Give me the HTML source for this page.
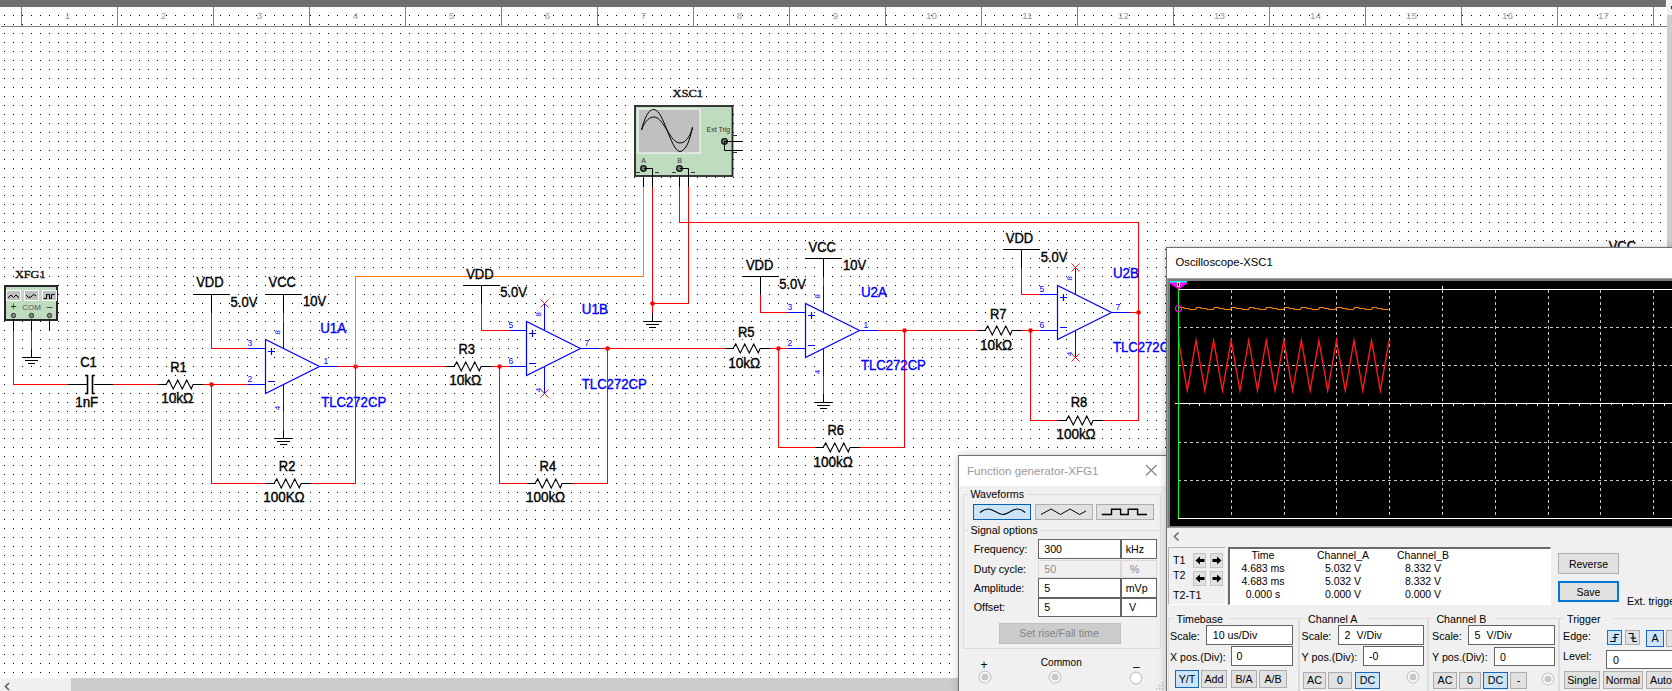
<!DOCTYPE html><html><head><meta charset="utf-8"><style>

*{box-sizing:border-box}
body{margin:0;width:1672px;height:691px;overflow:hidden;position:relative;background:#fff;font-family:"Liberation Sans",sans-serif}
.abs{position:absolute}
.dlg{position:absolute;background:#f0f0f0;border:1px solid #6f6f6f;overflow:hidden}
.t{position:absolute;white-space:nowrap;font-size:10.7px;color:#000;line-height:1}
.box{position:absolute;background:#fff;border:1px solid #7a7a7a}
.btn{position:absolute;background:#e1e1e1;border:1px solid #adadad;text-align:center;font-size:10.7px;white-space:nowrap}
.sel{background:#cce4f7;border:1px solid #1c64b8}
.grp{position:absolute;border:1px solid #dcdcdc}
.rad{position:absolute;width:12px;height:12px;border-radius:50%;background:#fff;border:1px solid #d9d9d9}
.rad i{position:absolute;left:2px;top:2px;width:6px;height:6px;border-radius:50%;background:#c8c8c8}

</style></head><body>
<svg class="abs" style="left:0;top:0" width="1672" height="691">
<defs><pattern id="dots" x="4" y="6" width="9" height="9" patternUnits="userSpaceOnUse"><rect width="1" height="1" fill="#000"/></pattern></defs>
<rect x="0" y="0" width="1672" height="691" fill="url(#dots)"/>
<rect x="0" y="0" width="1666" height="7" fill="#6f6f6f"/>
<path d="M0.5,26.5 L1666.5,26.5" stroke="#808080" stroke-width="1" fill="none" shape-rendering="crispEdges"/>
<path d="M21.5,6.5 L21.5,26.5" stroke="#808080" stroke-width="1" fill="none" shape-rendering="crispEdges"/>
<text x="67.4" y="19.2" font-family='"Liberation Sans",sans-serif' font-size="9.8" font-weight="normal" fill="#9a9a9a" text-anchor="middle" >1</text>
<path d="M117.5,6.5 L117.5,26.5" stroke="#808080" stroke-width="1" fill="none" shape-rendering="crispEdges"/>
<text x="163.4" y="19.2" font-family='"Liberation Sans",sans-serif' font-size="9.8" font-weight="normal" fill="#9a9a9a" text-anchor="middle" >2</text>
<path d="M213.5,6.5 L213.5,26.5" stroke="#808080" stroke-width="1" fill="none" shape-rendering="crispEdges"/>
<text x="259.4" y="19.2" font-family='"Liberation Sans",sans-serif' font-size="9.8" font-weight="normal" fill="#9a9a9a" text-anchor="middle" >3</text>
<path d="M309.5,6.5 L309.5,26.5" stroke="#808080" stroke-width="1" fill="none" shape-rendering="crispEdges"/>
<text x="355.4" y="19.2" font-family='"Liberation Sans",sans-serif' font-size="9.8" font-weight="normal" fill="#9a9a9a" text-anchor="middle" >4</text>
<path d="M405.5,6.5 L405.5,26.5" stroke="#808080" stroke-width="1" fill="none" shape-rendering="crispEdges"/>
<text x="451.4" y="19.2" font-family='"Liberation Sans",sans-serif' font-size="9.8" font-weight="normal" fill="#9a9a9a" text-anchor="middle" >5</text>
<path d="M501.5,6.5 L501.5,26.5" stroke="#808080" stroke-width="1" fill="none" shape-rendering="crispEdges"/>
<text x="547.4" y="19.2" font-family='"Liberation Sans",sans-serif' font-size="9.8" font-weight="normal" fill="#9a9a9a" text-anchor="middle" >6</text>
<path d="M597.5,6.5 L597.5,26.5" stroke="#808080" stroke-width="1" fill="none" shape-rendering="crispEdges"/>
<text x="643.4" y="19.2" font-family='"Liberation Sans",sans-serif' font-size="9.8" font-weight="normal" fill="#9a9a9a" text-anchor="middle" >7</text>
<path d="M693.5,6.5 L693.5,26.5" stroke="#808080" stroke-width="1" fill="none" shape-rendering="crispEdges"/>
<text x="739.4" y="19.2" font-family='"Liberation Sans",sans-serif' font-size="9.8" font-weight="normal" fill="#9a9a9a" text-anchor="middle" >8</text>
<path d="M789.5,6.5 L789.5,26.5" stroke="#808080" stroke-width="1" fill="none" shape-rendering="crispEdges"/>
<text x="835.4" y="19.2" font-family='"Liberation Sans",sans-serif' font-size="9.8" font-weight="normal" fill="#9a9a9a" text-anchor="middle" >9</text>
<path d="M885.5,6.5 L885.5,26.5" stroke="#808080" stroke-width="1" fill="none" shape-rendering="crispEdges"/>
<text x="931.4" y="19.2" font-family='"Liberation Sans",sans-serif' font-size="9.8" font-weight="normal" fill="#9a9a9a" text-anchor="middle" >10</text>
<path d="M981.5,6.5 L981.5,26.5" stroke="#808080" stroke-width="1" fill="none" shape-rendering="crispEdges"/>
<text x="1027.4" y="19.2" font-family='"Liberation Sans",sans-serif' font-size="9.8" font-weight="normal" fill="#9a9a9a" text-anchor="middle" >11</text>
<path d="M1077.5,6.5 L1077.5,26.5" stroke="#808080" stroke-width="1" fill="none" shape-rendering="crispEdges"/>
<text x="1123.4" y="19.2" font-family='"Liberation Sans",sans-serif' font-size="9.8" font-weight="normal" fill="#9a9a9a" text-anchor="middle" >12</text>
<path d="M1173.5,6.5 L1173.5,26.5" stroke="#808080" stroke-width="1" fill="none" shape-rendering="crispEdges"/>
<text x="1219.4" y="19.2" font-family='"Liberation Sans",sans-serif' font-size="9.8" font-weight="normal" fill="#9a9a9a" text-anchor="middle" >13</text>
<path d="M1269.5,6.5 L1269.5,26.5" stroke="#808080" stroke-width="1" fill="none" shape-rendering="crispEdges"/>
<text x="1315.4" y="19.2" font-family='"Liberation Sans",sans-serif' font-size="9.8" font-weight="normal" fill="#9a9a9a" text-anchor="middle" >14</text>
<path d="M1365.5,6.5 L1365.5,26.5" stroke="#808080" stroke-width="1" fill="none" shape-rendering="crispEdges"/>
<text x="1411.4" y="19.2" font-family='"Liberation Sans",sans-serif' font-size="9.8" font-weight="normal" fill="#9a9a9a" text-anchor="middle" >15</text>
<path d="M1461.5,6.5 L1461.5,26.5" stroke="#808080" stroke-width="1" fill="none" shape-rendering="crispEdges"/>
<text x="1507.4" y="19.2" font-family='"Liberation Sans",sans-serif' font-size="9.8" font-weight="normal" fill="#9a9a9a" text-anchor="middle" >16</text>
<path d="M1557.5,6.5 L1557.5,26.5" stroke="#808080" stroke-width="1" fill="none" shape-rendering="crispEdges"/>
<text x="1603.4" y="19.2" font-family='"Liberation Sans",sans-serif' font-size="9.8" font-weight="normal" fill="#9a9a9a" text-anchor="middle" >17</text>
<path d="M1653.5,6.5 L1653.5,26.5" stroke="#808080" stroke-width="1" fill="none" shape-rendering="crispEdges"/>
<rect x="1667" y="0" width="5" height="691" fill="#cdcdcd"/>
<rect x="1667" y="0" width="5" height="15" fill="#f0f0f0"/>
<rect x="1671" y="6" width="1" height="3" fill="#333"/>
<rect x="0" y="678" width="1672" height="13" fill="#cdcdcd"/>
<rect x="0" y="678" width="71" height="13" fill="#f0f0f0"/>
<path d="M9,683L5.5,686.5L9,690" stroke="#606060" stroke-width="1.6" fill="none"/>
<rect x="5" y="286" width="52" height="34" fill="#c0dcc0" stroke="#262626" stroke-width="2"/>
<rect x="6.5" y="290.5" width="14" height="10" fill="#c0c0c0" stroke="#fff" stroke-width="1"/>
<rect x="24.5" y="290.5" width="14" height="10" fill="#c0c0c0" stroke="#fff" stroke-width="1"/>
<rect x="42.5" y="290.5" width="14" height="10" fill="#c0c0c0" stroke="#fff" stroke-width="1"/>
<path d="M8,298L11,295L13.5,297.5L16,295L19,298" stroke="#000" stroke-width="1" fill="none"/>
<path d="M26,295Q28.5,299 31,297Q33.5,293 36,296" stroke="#000" stroke-width="1" fill="none"/>
<path d="M43.5,298.5H46.5V294.5H49.5V298.5H51.5V294.5H54.5" stroke="#000" stroke-width="1" fill="none"/>
<text x="13.5" y="310" font-family='"Liberation Sans",sans-serif' font-size="10" font-weight="normal" fill="#202020" text-anchor="middle" >+</text>
<text x="31.5" y="310" font-family='"Liberation Sans",sans-serif' font-size="8" font-weight="normal" fill="#555" text-anchor="middle" >COM</text>
<text x="49.5" y="310" font-family='"Liberation Sans",sans-serif' font-size="10" font-weight="normal" fill="#202020" text-anchor="middle" >–</text>
<circle cx="13.5" cy="315.5" r="2.2" fill="#888" stroke="#333" stroke-width="1"/>
<circle cx="31.5" cy="315.5" r="2.2" fill="#888" stroke="#333" stroke-width="1"/>
<circle cx="49.5" cy="315.5" r="2.2" fill="#888" stroke="#333" stroke-width="1"/>
<text x="15" y="277.6" font-family="Liberation Serif" font-size="11.3" fill="#111" stroke="#111" stroke-width="0.35" textLength="30.5" lengthAdjust="spacingAndGlyphs">XFG1</text>
<path d="M13.5,318.5 L13.5,330.5" stroke="#000000" stroke-width="1" fill="none" shape-rendering="crispEdges"/>
<path d="M13.5,330.5 L13.5,384.5 L67.5,384.5" stroke="#ff0000" stroke-width="1" fill="none" shape-rendering="crispEdges"/>
<path d="M31.5,318.5 L31.5,330.5" stroke="#000000" stroke-width="1" fill="none" shape-rendering="crispEdges"/>
<path d="M31.5,330.5 L31.5,348.5" stroke="#ff0000" stroke-width="1" fill="none" shape-rendering="crispEdges"/>
<path d="M31.5,348.5 L31.5,357.5" stroke="#000000" stroke-width="1" fill="none" shape-rendering="crispEdges"/>
<path d="M22,357.5H41M25,360.5H38M28,363.5H35" stroke="#000" stroke-width="1" shape-rendering="crispEdges"/>
<path d="M49.5,318.5 L49.5,330.5" stroke="#000000" stroke-width="1" fill="none" shape-rendering="crispEdges"/>
<path d="M67.5,384.5 L86.5,384.5" stroke="#000000" stroke-width="1" fill="none" shape-rendering="crispEdges"/>
<path d="M94.5,384.5 L112.5,384.5" stroke="#000000" stroke-width="1" fill="none" shape-rendering="crispEdges"/>
<path d="M85,375.5H87.5V393.5H85M95,375.5H92.5V393.5H95" stroke="#000" stroke-width="1.6" fill="none"/>
<text x="80.2" y="367.4" font-family='"Liberation Sans",sans-serif' font-size="14" font-weight="normal" fill="#000" stroke="#000" stroke-width="0.38" text-anchor="start" textLength="16.6" lengthAdjust="spacingAndGlyphs" >C1</text>
<text x="75.2" y="407.4" font-family='"Liberation Sans",sans-serif' font-size="14" font-weight="normal" fill="#000" stroke="#000" stroke-width="0.38" text-anchor="start" textLength="23.1" lengthAdjust="spacingAndGlyphs" >1nF</text>
<path d="M112.5,384.5 L157.5,384.5" stroke="#ff0000" stroke-width="1" fill="none" shape-rendering="crispEdges"/>
<path d="M157.5,384.5 L166.5,384.5" stroke="#000000" stroke-width="1" fill="none" shape-rendering="crispEdges"/>
<path d="M193.5,384.5 L202.5,384.5" stroke="#000000" stroke-width="1" fill="none" shape-rendering="crispEdges"/>
<path d="M166,384.5 L168.75,380.0 L173.25,389.0 L177.75,380.0 L182.25,389.0 L186.75,380.0 L191.25,389.0 L193,384.5" stroke="#000" stroke-width="1.1" fill="none"/>
<text x="170.2" y="372" font-family='"Liberation Sans",sans-serif' font-size="14" font-weight="normal" fill="#000" stroke="#000" stroke-width="0.38" text-anchor="start" textLength="16.6" lengthAdjust="spacingAndGlyphs" >R1</text>
<text x="161.2" y="403.4" font-family='"Liberation Sans",sans-serif' font-size="14" font-weight="normal" fill="#000" stroke="#000" stroke-width="0.38" text-anchor="start" textLength="32.1" lengthAdjust="spacingAndGlyphs" >10kΩ</text>
<path d="M202.5,384.5 L247.5,384.5" stroke="#ff0000" stroke-width="1" fill="none" shape-rendering="crispEdges"/>
<circle cx="211.5" cy="384.5" r="2.3" fill="#ff0000"/>
<path d="M211.5,384.5 L211.5,483.5 L265.5,483.5" stroke="#ff0000" stroke-width="1" fill="none" shape-rendering="crispEdges"/>
<path d="M265.5,483.5 L274.5,483.5" stroke="#000000" stroke-width="1" fill="none" shape-rendering="crispEdges"/>
<path d="M301.5,483.5 L310.5,483.5" stroke="#000000" stroke-width="1" fill="none" shape-rendering="crispEdges"/>
<path d="M274,483.5 L276.75,479.0 L281.25,488.0 L285.75,479.0 L290.25,488.0 L294.75,479.0 L299.25,488.0 L301,483.5" stroke="#000" stroke-width="1.1" fill="none"/>
<text x="278.8" y="471" font-family='"Liberation Sans",sans-serif' font-size="14" font-weight="normal" fill="#000" stroke="#000" stroke-width="0.38" text-anchor="start" textLength="16.6" lengthAdjust="spacingAndGlyphs" >R2</text>
<text x="263.2" y="502" font-family='"Liberation Sans",sans-serif' font-size="14" font-weight="normal" fill="#000" stroke="#000" stroke-width="0.38" text-anchor="start" textLength="41.5" lengthAdjust="spacingAndGlyphs" >100KΩ</text>
<path d="M310.5,483.5 L355.5,483.5 L355.5,366.5" stroke="#ff0000" stroke-width="1" fill="none" shape-rendering="crispEdges"/>
<path d="M193.5,294.5 L229.5,294.5" stroke="#000000" stroke-width="1" fill="none" shape-rendering="crispEdges"/>
<path d="M211.5,294.5 L211.5,312.5" stroke="#000000" stroke-width="1" fill="none" shape-rendering="crispEdges"/>
<text x="196.2" y="287.4" font-family='"Liberation Sans",sans-serif' font-size="14" font-weight="normal" fill="#000" stroke="#000" stroke-width="0.38" text-anchor="start" textLength="27.4" lengthAdjust="spacingAndGlyphs" >VDD</text>
<text x="230.6" y="306.5" font-family='"Liberation Sans",sans-serif' font-size="14" font-weight="normal" fill="#000" stroke="#000" stroke-width="0.38" text-anchor="start" textLength="26.7" lengthAdjust="spacingAndGlyphs" >5.0V</text>
<path d="M211.5,312.5 L211.5,348.5 L247.5,348.5" stroke="#ff0000" stroke-width="1" fill="none" shape-rendering="crispEdges"/>
<path d="M265.5,294.5 L301.5,294.5" stroke="#000000" stroke-width="1" fill="none" shape-rendering="crispEdges"/>
<path d="M283.5,294.5 L283.5,312.5" stroke="#000000" stroke-width="1" fill="none" shape-rendering="crispEdges"/>
<text x="268.59999999999997" y="287" font-family='"Liberation Sans",sans-serif' font-size="14" font-weight="normal" fill="#000" stroke="#000" stroke-width="0.38" text-anchor="start" textLength="27.4" lengthAdjust="spacingAndGlyphs" >VCC</text>
<text x="303.0" y="306.3" font-family='"Liberation Sans",sans-serif' font-size="14" font-weight="normal" fill="#000" stroke="#000" stroke-width="0.38" text-anchor="start" textLength="23.1" lengthAdjust="spacingAndGlyphs" >10V</text>
<path d="M283.5,312.5 L283.5,321.5" stroke="#ff0000" stroke-width="1" fill="none" shape-rendering="crispEdges"/>
<path d="M265.5,339.5L265.5,393.5L319.5,366.5Z" stroke="#0000ff" stroke-width="1.2" fill="none"/>
<path d="M247.5,348.5 L265.5,348.5" stroke="#0000ff" stroke-width="1" fill="none" shape-rendering="crispEdges"/>
<path d="M247.5,384.5 L265.5,384.5" stroke="#0000ff" stroke-width="1" fill="none" shape-rendering="crispEdges"/>
<path d="M319.5,366.5 L337.5,366.5" stroke="#0000ff" stroke-width="1" fill="none" shape-rendering="crispEdges"/>
<path d="M283.5,339.5 L283.5,348.5" stroke="#0000ff" stroke-width="1" fill="none" shape-rendering="crispEdges"/>
<path d="M283.5,384.5 L283.5,411.5" stroke="#0000ff" stroke-width="1" fill="none" shape-rendering="crispEdges"/>
<path d="M283.5,321.5 L283.5,348.5" stroke="#0000ff" stroke-width="1" fill="none" shape-rendering="crispEdges"/>
<path d="M268,351.5H275M271.5,348V355M268,381.5H275" stroke="#0000ff" stroke-width="1.2"/>
<text x="247.5" y="346.3" font-family="Liberation Sans" font-size="8.5" fill="#0000ff">3</text>
<text x="247.5" y="382.2" font-family="Liberation Sans" font-size="8.5" fill="#0000ff">2</text>
<text x="323.5" y="363.8" font-family="Liberation Sans" font-size="8.5" fill="#0000ff">1</text>
<text transform="translate(279.7,332.3) rotate(-90)" text-anchor="middle" font-family="Liberation Sans" font-size="8" fill="#0000ff">8</text>
<text transform="translate(279.7,408) rotate(-90)" text-anchor="middle" font-family="Liberation Sans" font-size="8" fill="#0000ff">4</text>
<path d="M283.5,411.5 L283.5,429.5" stroke="#ff0000" stroke-width="1" fill="none" shape-rendering="crispEdges"/>
<path d="M283.5,429.5 L283.5,438.5" stroke="#000000" stroke-width="1" fill="none" shape-rendering="crispEdges"/>
<path d="M274,438.5H293M277,441.5H290M280,444.5H287" stroke="#000" stroke-width="1" shape-rendering="crispEdges"/>
<text x="320.2" y="333" font-family='"Liberation Sans",sans-serif' font-size="14" font-weight="normal" fill="#0000ff" stroke="#0000ff" stroke-width="0.38" text-anchor="start" textLength="26.0" lengthAdjust="spacingAndGlyphs" >U1A</text>
<text x="321.2" y="406.7" font-family='"Liberation Sans",sans-serif' font-size="14" font-weight="normal" fill="#0000ff" stroke="#0000ff" stroke-width="0.38" text-anchor="start" textLength="65.0" lengthAdjust="spacingAndGlyphs" >TLC272CP</text>
<path d="M337.5,366.5 L445.5,366.5" stroke="#ff0000" stroke-width="1" fill="none" shape-rendering="crispEdges"/>
<circle cx="355.5" cy="366.5" r="2.3" fill="#ff0000"/>
<path d="M355.5,366.5 L355.5,276.5 L643.5,276.5 L643.5,186.5" stroke="#ff8000" stroke-width="1" fill="none" shape-rendering="crispEdges"/>
<path d="M445.5,366.5 L454.5,366.5" stroke="#000000" stroke-width="1" fill="none" shape-rendering="crispEdges"/>
<path d="M481.5,366.5 L490.5,366.5" stroke="#000000" stroke-width="1" fill="none" shape-rendering="crispEdges"/>
<path d="M454,366.5 L456.75,362.0 L461.25,371.0 L465.75,362.0 L470.25,371.0 L474.75,362.0 L479.25,371.0 L481,366.5" stroke="#000" stroke-width="1.1" fill="none"/>
<text x="458.4" y="353.8" font-family='"Liberation Sans",sans-serif' font-size="14" font-weight="normal" fill="#000" stroke="#000" stroke-width="0.38" text-anchor="start" textLength="16.6" lengthAdjust="spacingAndGlyphs" >R3</text>
<text x="449.2" y="385" font-family='"Liberation Sans",sans-serif' font-size="14" font-weight="normal" fill="#000" stroke="#000" stroke-width="0.38" text-anchor="start" textLength="32.1" lengthAdjust="spacingAndGlyphs" >10kΩ</text>
<path d="M490.5,366.5 L508.5,366.5" stroke="#ff0000" stroke-width="1" fill="none" shape-rendering="crispEdges"/>
<circle cx="499.5" cy="366.5" r="2.3" fill="#ff0000"/>
<path d="M499.5,366.5 L499.5,483.5 L526.5,483.5" stroke="#ff0000" stroke-width="1" fill="none" shape-rendering="crispEdges"/>
<path d="M526.5,483.5 L535.5,483.5" stroke="#000000" stroke-width="1" fill="none" shape-rendering="crispEdges"/>
<path d="M562.5,483.5 L571.5,483.5" stroke="#000000" stroke-width="1" fill="none" shape-rendering="crispEdges"/>
<path d="M535,483.5 L537.75,479.0 L542.25,488.0 L546.75,479.0 L551.25,488.0 L555.75,479.0 L560.25,488.0 L562,483.5" stroke="#000" stroke-width="1.1" fill="none"/>
<text x="539.6" y="471.2" font-family='"Liberation Sans",sans-serif' font-size="14" font-weight="normal" fill="#000" stroke="#000" stroke-width="0.38" text-anchor="start" textLength="16.6" lengthAdjust="spacingAndGlyphs" >R4</text>
<text x="525.9000000000001" y="501.5" font-family='"Liberation Sans",sans-serif' font-size="14" font-weight="normal" fill="#000" stroke="#000" stroke-width="0.38" text-anchor="start" textLength="39.3" lengthAdjust="spacingAndGlyphs" >100kΩ</text>
<path d="M571.5,483.5 L607.5,483.5 L607.5,348.5" stroke="#ff0000" stroke-width="1" fill="none" shape-rendering="crispEdges"/>
<path d="M463.5,285.5 L499.5,285.5" stroke="#000000" stroke-width="1" fill="none" shape-rendering="crispEdges"/>
<path d="M481.5,285.5 L481.5,303.5" stroke="#000000" stroke-width="1" fill="none" shape-rendering="crispEdges"/>
<text x="466.2" y="278.5" font-family='"Liberation Sans",sans-serif' font-size="14" font-weight="normal" fill="#000" stroke="#000" stroke-width="0.38" text-anchor="start" textLength="27.4" lengthAdjust="spacingAndGlyphs" >VDD</text>
<text x="500.2" y="297" font-family='"Liberation Sans",sans-serif' font-size="14" font-weight="normal" fill="#000" stroke="#000" stroke-width="0.38" text-anchor="start" textLength="26.7" lengthAdjust="spacingAndGlyphs" >5.0V</text>
<path d="M481.5,303.5 L481.5,330.5 L508.5,330.5" stroke="#ff0000" stroke-width="1" fill="none" shape-rendering="crispEdges"/>
<path d="M526.5,321.5L526.5,375.5L580.5,348.5Z" stroke="#0000ff" stroke-width="1.2" fill="none"/>
<path d="M508.5,330.5 L526.5,330.5" stroke="#0000ff" stroke-width="1" fill="none" shape-rendering="crispEdges"/>
<path d="M508.5,366.5 L526.5,366.5" stroke="#0000ff" stroke-width="1" fill="none" shape-rendering="crispEdges"/>
<path d="M580.5,348.5 L598.5,348.5" stroke="#0000ff" stroke-width="1" fill="none" shape-rendering="crispEdges"/>
<path d="M544.5,303.5 L544.5,330.5" stroke="#0000ff" stroke-width="1" fill="none" shape-rendering="crispEdges"/>
<path d="M544.5,366.5 L544.5,393.5" stroke="#0000ff" stroke-width="1" fill="none" shape-rendering="crispEdges"/>
<path d="M540.5,299.5L548.5,307.5M548.5,299.5L540.5,307.5" stroke="#ff0000" stroke-width="0.9"/>
<path d="M540.5,389.5L548.5,397.5M548.5,389.5L540.5,397.5" stroke="#ff0000" stroke-width="0.9"/>
<path d="M529,333.5H536M532.5,330V337M529,363.5H536" stroke="#0000ff" stroke-width="1.2"/>
<text x="508.5" y="328.3" font-family="Liberation Sans" font-size="8.5" fill="#0000ff">5</text>
<text x="508.5" y="364.2" font-family="Liberation Sans" font-size="8.5" fill="#0000ff">6</text>
<text x="584.5" y="345.8" font-family="Liberation Sans" font-size="8.5" fill="#0000ff">7</text>
<text transform="translate(540.7,314.3) rotate(-90)" text-anchor="middle" font-family="Liberation Sans" font-size="8" fill="#0000ff">8</text>
<text transform="translate(540.7,390) rotate(-90)" text-anchor="middle" font-family="Liberation Sans" font-size="8" fill="#0000ff">4</text>
<text x="581.8000000000001" y="314.4" font-family='"Liberation Sans",sans-serif' font-size="14" font-weight="normal" fill="#0000ff" stroke="#0000ff" stroke-width="0.38" text-anchor="start" textLength="26.0" lengthAdjust="spacingAndGlyphs" >U1B</text>
<text x="581.8000000000001" y="388.5" font-family='"Liberation Sans",sans-serif' font-size="14" font-weight="normal" fill="#0000ff" stroke="#0000ff" stroke-width="0.38" text-anchor="start" textLength="65.0" lengthAdjust="spacingAndGlyphs" >TLC272CP</text>
<path d="M598.5,348.5 L724.5,348.5" stroke="#ff0000" stroke-width="1" fill="none" shape-rendering="crispEdges"/>
<circle cx="607.5" cy="348.5" r="2.3" fill="#ff0000"/>
<rect x="635" y="106" width="97.5" height="70" fill="#c0dcc0" stroke="#262626" stroke-width="1.8"/>
<rect x="638" y="109" width="62" height="44" fill="#c0c0c0" stroke="#fff" stroke-width="1"/>
<path d="M641.5,130 C646,112 651,109 654,109.5 C659,110 663,120 667,130 C671,140 675,151 680,151.5 C686,151 690,140 692.5,127" stroke="#000" stroke-width="1" fill="none"/>
<path d="M641.5,130 C645,120 650,117 654,117 C659,117 663,124 667,130 C671,137 675,143 680,143 C686,143 690,136 692.5,128" stroke="#000" stroke-width="1" fill="none"/>
<text x="672.5" y="97.3" font-family="Liberation Serif" font-size="10.8" fill="#111" stroke="#111" stroke-width="0.35" textLength="30.5" lengthAdjust="spacingAndGlyphs">XSC1</text>
<text x="706.5" y="132" font-family='"Liberation Sans",sans-serif' font-size="7" font-weight="normal" fill="#333" text-anchor="start" >Ext Trig</text>
<text x="643.5" y="163" font-family='"Liberation Sans",sans-serif' font-size="7" font-weight="normal" fill="#333" text-anchor="middle" >A</text>
<text x="679.5" y="163" font-family='"Liberation Sans",sans-serif' font-size="7" font-weight="normal" fill="#333" text-anchor="middle" >B</text>
<circle cx="643.5" cy="168.5" r="2.8" fill="#777" stroke="#111" stroke-width="1.3"/>
<circle cx="679.5" cy="168.5" r="2.8" fill="#777" stroke="#111" stroke-width="1.3"/>
<circle cx="724.5" cy="141.5" r="2.8" fill="#777" stroke="#111" stroke-width="1.3"/>
<path d="M644,168.5H652.5V177M680,168.5H688.5V177" stroke="#000" stroke-width="1" fill="none"/>
<path d="M724.5,141.5H743M724.5,141.5V150.5H743" stroke="#000" stroke-width="1" fill="none"/>
<path d="M636,172.5H640M655,172.5H659M672,172.5H676M691,172.5H695M733,135.5H737M733,152.5H737" stroke="#333" stroke-width="1"/>
<path d="M643.5,177.5 L643.5,186.5" stroke="#000000" stroke-width="1" fill="none" shape-rendering="crispEdges"/>
<path d="M652.5,177.5 L652.5,186.5" stroke="#000000" stroke-width="1" fill="none" shape-rendering="crispEdges"/>
<path d="M679.5,177.5 L679.5,186.5" stroke="#000000" stroke-width="1" fill="none" shape-rendering="crispEdges"/>
<path d="M688.5,177.5 L688.5,186.5" stroke="#000000" stroke-width="1" fill="none" shape-rendering="crispEdges"/>
<path d="M652.5,186.5 L652.5,312.5" stroke="#ff0000" stroke-width="1" fill="none" shape-rendering="crispEdges"/>
<path d="M652.5,312.5 L652.5,321.5" stroke="#000000" stroke-width="1" fill="none" shape-rendering="crispEdges"/>
<path d="M643,321.5H662M646,324.5H659M649,327.5H656" stroke="#000" stroke-width="1" shape-rendering="crispEdges"/>
<circle cx="652.5" cy="303.5" r="2.3" fill="#ff0000"/>
<path d="M652.5,303.5 L688.5,303.5 L688.5,186.5" stroke="#ff0000" stroke-width="1" fill="none" shape-rendering="crispEdges"/>
<path d="M679.5,186.5 L679.5,222.5 L1138.5,222.5 L1138.5,420.5 L1102.5,420.5" stroke="#ff0000" stroke-width="1" fill="none" shape-rendering="crispEdges"/>
<path d="M724.5,348.5 L733.5,348.5" stroke="#000000" stroke-width="1" fill="none" shape-rendering="crispEdges"/>
<path d="M760.5,348.5 L769.5,348.5" stroke="#000000" stroke-width="1" fill="none" shape-rendering="crispEdges"/>
<path d="M733,348.5 L735.75,344.0 L740.25,353.0 L744.75,344.0 L749.25,353.0 L753.75,344.0 L758.25,353.0 L760,348.5" stroke="#000" stroke-width="1.1" fill="none"/>
<text x="737.9000000000001" y="336.5" font-family='"Liberation Sans",sans-serif' font-size="14" font-weight="normal" fill="#000" stroke="#000" stroke-width="0.38" text-anchor="start" textLength="16.6" lengthAdjust="spacingAndGlyphs" >R5</text>
<text x="728.2" y="367.5" font-family='"Liberation Sans",sans-serif' font-size="14" font-weight="normal" fill="#000" stroke="#000" stroke-width="0.38" text-anchor="start" textLength="32.1" lengthAdjust="spacingAndGlyphs" >10kΩ</text>
<path d="M769.5,348.5 L787.5,348.5" stroke="#ff0000" stroke-width="1" fill="none" shape-rendering="crispEdges"/>
<circle cx="778.5" cy="348.5" r="2.3" fill="#ff0000"/>
<path d="M778.5,348.5 L778.5,447.5 L814.5,447.5" stroke="#ff0000" stroke-width="1" fill="none" shape-rendering="crispEdges"/>
<path d="M814.5,447.5 L823.5,447.5" stroke="#000000" stroke-width="1" fill="none" shape-rendering="crispEdges"/>
<path d="M850.5,447.5 L859.5,447.5" stroke="#000000" stroke-width="1" fill="none" shape-rendering="crispEdges"/>
<path d="M823,447.5 L825.75,443.0 L830.25,452.0 L834.75,443.0 L839.25,452.0 L843.75,443.0 L848.25,452.0 L850,447.5" stroke="#000" stroke-width="1.1" fill="none"/>
<text x="827.5" y="435.3" font-family='"Liberation Sans",sans-serif' font-size="14" font-weight="normal" fill="#000" stroke="#000" stroke-width="0.38" text-anchor="start" textLength="16.6" lengthAdjust="spacingAndGlyphs" >R6</text>
<text x="813.6" y="466.9" font-family='"Liberation Sans",sans-serif' font-size="14" font-weight="normal" fill="#000" stroke="#000" stroke-width="0.38" text-anchor="start" textLength="39.3" lengthAdjust="spacingAndGlyphs" >100kΩ</text>
<path d="M859.5,447.5 L904.5,447.5 L904.5,330.5" stroke="#ff0000" stroke-width="1" fill="none" shape-rendering="crispEdges"/>
<path d="M742.5,276.5 L778.5,276.5" stroke="#000000" stroke-width="1" fill="none" shape-rendering="crispEdges"/>
<path d="M760.5,276.5 L760.5,294.5" stroke="#000000" stroke-width="1" fill="none" shape-rendering="crispEdges"/>
<text x="745.9000000000001" y="269.9" font-family='"Liberation Sans",sans-serif' font-size="14" font-weight="normal" fill="#000" stroke="#000" stroke-width="0.38" text-anchor="start" textLength="27.4" lengthAdjust="spacingAndGlyphs" >VDD</text>
<text x="779.2" y="288.6" font-family='"Liberation Sans",sans-serif' font-size="14" font-weight="normal" fill="#000" stroke="#000" stroke-width="0.38" text-anchor="start" textLength="26.7" lengthAdjust="spacingAndGlyphs" >5.0V</text>
<path d="M760.5,294.5 L760.5,312.5 L787.5,312.5" stroke="#ff0000" stroke-width="1" fill="none" shape-rendering="crispEdges"/>
<path d="M805.5,258.5 L841.5,258.5" stroke="#000000" stroke-width="1" fill="none" shape-rendering="crispEdges"/>
<path d="M823.5,258.5 L823.5,276.5" stroke="#000000" stroke-width="1" fill="none" shape-rendering="crispEdges"/>
<text x="808.6" y="251.5" font-family='"Liberation Sans",sans-serif' font-size="14" font-weight="normal" fill="#000" stroke="#000" stroke-width="0.38" text-anchor="start" textLength="27.4" lengthAdjust="spacingAndGlyphs" >VCC</text>
<text x="843.0" y="269.9" font-family='"Liberation Sans",sans-serif' font-size="14" font-weight="normal" fill="#000" stroke="#000" stroke-width="0.38" text-anchor="start" textLength="23.1" lengthAdjust="spacingAndGlyphs" >10V</text>
<path d="M823.5,276.5 L823.5,285.5" stroke="#ff0000" stroke-width="1" fill="none" shape-rendering="crispEdges"/>
<path d="M805.5,303.5L805.5,357.5L859.5,330.5Z" stroke="#0000ff" stroke-width="1.2" fill="none"/>
<path d="M787.5,312.5 L805.5,312.5" stroke="#0000ff" stroke-width="1" fill="none" shape-rendering="crispEdges"/>
<path d="M787.5,348.5 L805.5,348.5" stroke="#0000ff" stroke-width="1" fill="none" shape-rendering="crispEdges"/>
<path d="M859.5,330.5 L877.5,330.5" stroke="#0000ff" stroke-width="1" fill="none" shape-rendering="crispEdges"/>
<path d="M823.5,303.5 L823.5,312.5" stroke="#0000ff" stroke-width="1" fill="none" shape-rendering="crispEdges"/>
<path d="M823.5,348.5 L823.5,375.5" stroke="#0000ff" stroke-width="1" fill="none" shape-rendering="crispEdges"/>
<path d="M823.5,285.5 L823.5,312.5" stroke="#0000ff" stroke-width="1" fill="none" shape-rendering="crispEdges"/>
<path d="M808,315.5H815M811.5,312V319M808,345.5H815" stroke="#0000ff" stroke-width="1.2"/>
<text x="787.5" y="310.3" font-family="Liberation Sans" font-size="8.5" fill="#0000ff">3</text>
<text x="787.5" y="346.2" font-family="Liberation Sans" font-size="8.5" fill="#0000ff">2</text>
<text x="863.5" y="327.8" font-family="Liberation Sans" font-size="8.5" fill="#0000ff">1</text>
<text transform="translate(819.7,296.3) rotate(-90)" text-anchor="middle" font-family="Liberation Sans" font-size="8" fill="#0000ff">8</text>
<text transform="translate(819.7,372) rotate(-90)" text-anchor="middle" font-family="Liberation Sans" font-size="8" fill="#0000ff">4</text>
<path d="M823.5,375.5 L823.5,393.5" stroke="#ff0000" stroke-width="1" fill="none" shape-rendering="crispEdges"/>
<path d="M823.5,393.5 L823.5,402.5" stroke="#000000" stroke-width="1" fill="none" shape-rendering="crispEdges"/>
<path d="M814,402.5H833M817,405.5H830M820,408.5H827" stroke="#000" stroke-width="1" shape-rendering="crispEdges"/>
<text x="860.9000000000001" y="296.8" font-family='"Liberation Sans",sans-serif' font-size="14" font-weight="normal" fill="#0000ff" stroke="#0000ff" stroke-width="0.38" text-anchor="start" textLength="26.0" lengthAdjust="spacingAndGlyphs" >U2A</text>
<text x="860.9000000000001" y="370.3" font-family='"Liberation Sans",sans-serif' font-size="14" font-weight="normal" fill="#0000ff" stroke="#0000ff" stroke-width="0.38" text-anchor="start" textLength="65.0" lengthAdjust="spacingAndGlyphs" >TLC272CP</text>
<path d="M877.5,330.5 L976.5,330.5" stroke="#ff0000" stroke-width="1" fill="none" shape-rendering="crispEdges"/>
<circle cx="904.5" cy="330.5" r="2.3" fill="#ff0000"/>
<path d="M976.5,330.5 L985.5,330.5" stroke="#000000" stroke-width="1" fill="none" shape-rendering="crispEdges"/>
<path d="M1012.5,330.5 L1021.5,330.5" stroke="#000000" stroke-width="1" fill="none" shape-rendering="crispEdges"/>
<path d="M985,330.5 L987.75,326.0 L992.25,335.0 L996.75,326.0 L1001.25,335.0 L1005.75,326.0 L1010.25,335.0 L1012,330.5" stroke="#000" stroke-width="1.1" fill="none"/>
<text x="989.9000000000001" y="318.6" font-family='"Liberation Sans",sans-serif' font-size="14" font-weight="normal" fill="#000" stroke="#000" stroke-width="0.38" text-anchor="start" textLength="16.6" lengthAdjust="spacingAndGlyphs" >R7</text>
<text x="980.0" y="349.6" font-family='"Liberation Sans",sans-serif' font-size="14" font-weight="normal" fill="#000" stroke="#000" stroke-width="0.38" text-anchor="start" textLength="32.1" lengthAdjust="spacingAndGlyphs" >10kΩ</text>
<path d="M1021.5,330.5 L1039.5,330.5" stroke="#ff0000" stroke-width="1" fill="none" shape-rendering="crispEdges"/>
<circle cx="1030.5" cy="330.5" r="2.3" fill="#ff0000"/>
<path d="M1030.5,330.5 L1030.5,420.5 L1057.5,420.5" stroke="#ff0000" stroke-width="1" fill="none" shape-rendering="crispEdges"/>
<path d="M1057.5,420.5 L1066.5,420.5" stroke="#000000" stroke-width="1" fill="none" shape-rendering="crispEdges"/>
<path d="M1093.5,420.5 L1102.5,420.5" stroke="#000000" stroke-width="1" fill="none" shape-rendering="crispEdges"/>
<path d="M1066,420.5 L1068.75,416.0 L1073.25,425.0 L1077.75,416.0 L1082.25,425.0 L1086.75,416.0 L1091.25,425.0 L1093,420.5" stroke="#000" stroke-width="1.1" fill="none"/>
<text x="1070.7" y="407.4" font-family='"Liberation Sans",sans-serif' font-size="14" font-weight="normal" fill="#000" stroke="#000" stroke-width="0.38" text-anchor="start" textLength="16.6" lengthAdjust="spacingAndGlyphs" >R8</text>
<text x="1056.4" y="439" font-family='"Liberation Sans",sans-serif' font-size="14" font-weight="normal" fill="#000" stroke="#000" stroke-width="0.38" text-anchor="start" textLength="39.3" lengthAdjust="spacingAndGlyphs" >100kΩ</text>
<path d="M1003.5,249.5 L1039.5,249.5" stroke="#000000" stroke-width="1" fill="none" shape-rendering="crispEdges"/>
<path d="M1021.5,249.5 L1021.5,267.5" stroke="#000000" stroke-width="1" fill="none" shape-rendering="crispEdges"/>
<text x="1005.8000000000001" y="242.6" font-family='"Liberation Sans",sans-serif' font-size="14" font-weight="normal" fill="#000" stroke="#000" stroke-width="0.38" text-anchor="start" textLength="27.4" lengthAdjust="spacingAndGlyphs" >VDD</text>
<text x="1040.7" y="261.6" font-family='"Liberation Sans",sans-serif' font-size="14" font-weight="normal" fill="#000" stroke="#000" stroke-width="0.38" text-anchor="start" textLength="26.7" lengthAdjust="spacingAndGlyphs" >5.0V</text>
<path d="M1021.5,267.5 L1021.5,294.5 L1039.5,294.5" stroke="#ff0000" stroke-width="1" fill="none" shape-rendering="crispEdges"/>
<path d="M1057.5,285.5L1057.5,339.5L1111.5,312.5Z" stroke="#0000ff" stroke-width="1.2" fill="none"/>
<path d="M1039.5,294.5 L1057.5,294.5" stroke="#0000ff" stroke-width="1" fill="none" shape-rendering="crispEdges"/>
<path d="M1039.5,330.5 L1057.5,330.5" stroke="#0000ff" stroke-width="1" fill="none" shape-rendering="crispEdges"/>
<path d="M1111.5,312.5 L1129.5,312.5" stroke="#0000ff" stroke-width="1" fill="none" shape-rendering="crispEdges"/>
<path d="M1075.5,267.5 L1075.5,294.5" stroke="#0000ff" stroke-width="1" fill="none" shape-rendering="crispEdges"/>
<path d="M1075.5,330.5 L1075.5,357.5" stroke="#0000ff" stroke-width="1" fill="none" shape-rendering="crispEdges"/>
<path d="M1071.5,263.5L1079.5,271.5M1079.5,263.5L1071.5,271.5" stroke="#ff0000" stroke-width="0.9"/>
<path d="M1071.5,353.5L1079.5,361.5M1079.5,353.5L1071.5,361.5" stroke="#ff0000" stroke-width="0.9"/>
<path d="M1060,297.5H1067M1063.5,294V301M1060,327.5H1067" stroke="#0000ff" stroke-width="1.2"/>
<text x="1039.5" y="292.3" font-family="Liberation Sans" font-size="8.5" fill="#0000ff">5</text>
<text x="1039.5" y="328.2" font-family="Liberation Sans" font-size="8.5" fill="#0000ff">6</text>
<text x="1115.5" y="309.8" font-family="Liberation Sans" font-size="8.5" fill="#0000ff">7</text>
<text transform="translate(1071.7,278.3) rotate(-90)" text-anchor="middle" font-family="Liberation Sans" font-size="8" fill="#0000ff">8</text>
<text transform="translate(1071.7,354) rotate(-90)" text-anchor="middle" font-family="Liberation Sans" font-size="8" fill="#0000ff">4</text>
<path d="M1129.5,312.5 L1138.5,312.5" stroke="#ff0000" stroke-width="1" fill="none" shape-rendering="crispEdges"/>
<circle cx="1138.5" cy="312.5" r="2.3" fill="#ff0000"/>
<text x="1112.9" y="278.2" font-family='"Liberation Sans",sans-serif' font-size="14" font-weight="normal" fill="#0000ff" stroke="#0000ff" stroke-width="0.38" text-anchor="start" textLength="26.0" lengthAdjust="spacingAndGlyphs" >U2B</text>
<text x="1112.9" y="352.4" font-family='"Liberation Sans",sans-serif' font-size="14" font-weight="normal" fill="#0000ff" stroke="#0000ff" stroke-width="0.38" text-anchor="start" textLength="65.0" lengthAdjust="spacingAndGlyphs" >TLC272CP</text>
<text x="1608.7" y="250.5" font-family='"Liberation Sans",sans-serif' font-size="14" font-weight="normal" fill="#000" stroke="#000" stroke-width="0.38" text-anchor="start" textLength="27.4" lengthAdjust="spacingAndGlyphs" >VCC</text>
</svg>
<div class="abs" style="left:958px;top:455px;width:209px;height:240px;background:#f0f0f0;border:1px solid #6f6f6f;overflow:hidden;box-shadow:0 0 8px 0 rgba(0,0,0,0.22)">
<div class="abs" style="left:0.0px;top:0.0px;width:207.0px;height:30.0px;background:#fff"></div>
<div class="t" style="left:8.0px;top:8.9px;font-size:11.6px;color:#9a9a9a;">Function generator-XFG1</div>
<svg class="abs" style="left:185px;top:7px" width="14" height="14"><path d="M2,2L12.5,12.5M12.5,2L2,12.5" stroke="#808080" stroke-width="1.1"/></svg>
<div class="abs" style="left:4.0px;top:38.0px;width:198.0px;height:155.0px;border:1px solid #dcdcdc"></div>
<div class="abs" style="left:4.0px;top:74.0px;width:198.0px;height:1.0px;background:#dcdcdc"></div>
<div class="abs" style="left:9.0px;top:32.0px;width:59.0px;height:12.0px;background:#f0f0f0"></div>
<div class="t" style="left:11.4px;top:32.7px;font-size:10.7px;color:#000;">Waveforms</div>
<div class="abs" style="left:9.0px;top:68.0px;width:72.0px;height:12.0px;background:#f0f0f0"></div>
<div class="t" style="left:11.4px;top:68.5px;font-size:10.7px;color:#000;">Signal options</div>
<div class="abs" style="left:14.0px;top:48.0px;width:58.0px;height:16.0px;background:#cce4f7;border:1px solid #0a5fae"><svg width="56" height="15" style="position:absolute;left:0;top:0"><path d="M6,7.5 C9,5 12,4 14.75,4 C19,4 24,9.5 29,9.5 C34,9.5 38,4 43,4 C46,4 49,5.5 51,7.5" stroke="#000" stroke-width="1.1" fill="none"/></svg></div>
<div class="abs" style="left:76.0px;top:48.0px;width:58.0px;height:16.0px;background:#e1e1e1;border:1px solid #adadad"><svg width="56" height="15" style="position:absolute;left:0;top:0"><path d="M5,9.5L15,4L24.5,9.5L34,4L43.6,9.5L50,6" stroke="#000" stroke-width="1" fill="none"/></svg></div>
<div class="abs" style="left:137.0px;top:48.0px;width:58.0px;height:16.0px;background:#e1e1e1;border:1px solid #adadad"><svg width="56" height="15" style="position:absolute;left:0;top:0"><path d="M4.8,9.5H14.5V4.3H23.6V9.5H31.2V4.3H40.6V9.5H50" stroke="#000" stroke-width="1.4" fill="none"/></svg></div>
<div class="t" style="left:14.8px;top:87.9px;font-size:10.7px;color:#000;">Frequency:</div>
<div class="abs" style="left:79.0px;top:83.0px;width:83.0px;height:20.0px;background:#fff;border:1px solid #646464"></div>
<div class="abs" style="left:162.0px;top:83.0px;width:36.0px;height:20.0px;background:#fff;border:1px solid #646464"></div>
<div class="t" style="left:85.2px;top:87.9px;font-size:10.7px;color:#000;">300</div>
<div class="t" style="left:166.7px;top:87.9px;font-size:10.7px;color:#000;">kHz</div>
<div class="t" style="left:14.8px;top:107.9px;font-size:10.7px;color:#000;">Duty cycle:</div>
<div class="abs" style="left:79.0px;top:103.5px;width:83.0px;height:18.5px;background:#f0f0f0;border:1px solid #d9d9d9"></div>
<div class="abs" style="left:162.0px;top:103.5px;width:36.0px;height:18.5px;background:#f0f0f0;border:1px solid #d9d9d9"></div>
<div class="t" style="left:85.2px;top:107.9px;font-size:10.7px;color:#8a8a8a;">50</div>
<div class="t" style="left:170.7px;top:107.9px;font-size:10.7px;color:#8a8a8a;">%</div>
<div class="t" style="left:14.8px;top:126.9px;font-size:10.7px;color:#000;">Amplitude:</div>
<div class="abs" style="left:79.0px;top:122.0px;width:83.0px;height:20.0px;background:#fff;border:1px solid #646464"></div>
<div class="abs" style="left:162.0px;top:122.0px;width:36.0px;height:20.0px;background:#fff;border:1px solid #646464"></div>
<div class="t" style="left:85.2px;top:126.9px;font-size:10.7px;color:#000;">5</div>
<div class="t" style="left:166.7px;top:126.9px;font-size:10.7px;color:#000;">mVp</div>
<div class="t" style="left:14.8px;top:146.4px;font-size:10.7px;color:#000;">Offset:</div>
<div class="abs" style="left:79.0px;top:142.0px;width:83.0px;height:19.0px;background:#fff;border:1px solid #646464"></div>
<div class="abs" style="left:162.0px;top:142.0px;width:36.0px;height:19.0px;background:#fff;border:1px solid #646464"></div>
<div class="t" style="left:85.2px;top:146.4px;font-size:10.7px;color:#000;">5</div>
<div class="t" style="left:170.0px;top:146.4px;font-size:10.7px;color:#000;">V</div>
<div class="abs" style="left:40.0px;top:167.0px;width:122.0px;height:21.0px;background:#cccccc;border:1px solid #bfbfbf"></div>
<div class="t" style="left:60.3px;top:172.4px;font-size:10.7px;color:#838383;">Set rise/Fall time</div>
<div class="t" style="left:21.5px;top:202.8px;font-size:12px;color:#000;">+</div>
<div class="t" style="left:81.8px;top:201.5px;font-size:10.1px;color:#000;">Common</div>
<div class="t" style="left:174.0px;top:205.3px;font-size:12px;color:#000;">–</div>
<svg class="abs" style="left:18.6px;top:213.5px" width="14" height="14"><circle cx="7" cy="7" r="5.8" fill="#fff" stroke="#cacaca" stroke-width="1.3"/><circle cx="7" cy="7" r="3.5" fill="#c8c8c8"/></svg>
<svg class="abs" style="left:89.3px;top:213.5px" width="14" height="14"><circle cx="7" cy="7" r="5.8" fill="#fff" stroke="#cacaca" stroke-width="1.3"/><circle cx="7" cy="7" r="3.5" fill="#c8c8c8"/></svg>
<svg class="abs" style="left:170.3px;top:215.0px" width="14" height="14"><circle cx="7" cy="7" r="5.8" fill="#fff" stroke="#cacaca" stroke-width="1.3"/></svg>
<svg class="abs" style="left:193px;top:224px" width="14" height="12"><path d="M10,2h1.5v1.5h-1.5zM7,5h1.5v1.5h-1.5zM10,5h1.5v1.5h-1.5zM4,8h1.5v1.5h-1.5zM7,8h1.5v1.5h-1.5zM10,8h1.5v1.5h-1.5z" fill="#bdbdbd"/></svg>
</div>
<div class="abs" style="left:1166px;top:247px;width:520px;height:460px;background:#f0f0f0;border:1px solid #6f6f6f;overflow:hidden;box-shadow:0 0 8px 0 rgba(0,0,0,0.22)">
<div class="abs" style="left:0.0px;top:0.0px;width:513.0px;height:30.0px;background:#fff"></div>
<div class="t" style="left:8.5px;top:9.0px;font-size:11.3px;color:#000;">Oscilloscope-XSC1</div>
<div class="abs" style="left:0.0px;top:30.0px;width:513.0px;height:250.0px;background:#9d9d9d"></div>
<div class="abs" style="left:1.0px;top:31.0px;width:512.0px;height:248.0px;background:#7a7a7a"></div>
<div class="abs" style="left:3.0px;top:33.0px;width:510.0px;height:245.0px;background:#000"></div>
<svg class="abs" style="left:0px;top:30px" width="520" height="250"><g transform="translate(-1167,-278)"><path d="M1178,289.5H1680" stroke="#fff" stroke-width="1"/><path d="M1178,327.5H1680" stroke="#c8c8c8" stroke-width="1" stroke-dasharray="3,3"/><path d="M1178,365.5H1680" stroke="#c8c8c8" stroke-width="1" stroke-dasharray="3,3"/><path d="M1175,403.5H1680" stroke="#fff" stroke-width="1"/><path d="M1178,442.5H1680" stroke="#c8c8c8" stroke-width="1" stroke-dasharray="3,3"/><path d="M1178,480.5H1680" stroke="#c8c8c8" stroke-width="1" stroke-dasharray="3,3"/><path d="M1178,518.5H1680" stroke="#fff" stroke-width="1"/><path d="M1231.5,290V518" stroke="#c8c8c8" stroke-width="1" stroke-dasharray="3,3"/><path d="M1284.5,290V518" stroke="#c8c8c8" stroke-width="1" stroke-dasharray="3,3"/><path d="M1336.5,290V518" stroke="#c8c8c8" stroke-width="1" stroke-dasharray="3,3"/><path d="M1389.5,290V518" stroke="#c8c8c8" stroke-width="1" stroke-dasharray="3,3"/><path d="M1442.5,290V518" stroke="#c8c8c8" stroke-width="1" stroke-dasharray="3,3"/><path d="M1442.5,286V290" stroke="#fff" stroke-width="1"/><path d="M1495.5,290V518" stroke="#c8c8c8" stroke-width="1" stroke-dasharray="3,3"/><path d="M1548.5,290V518" stroke="#c8c8c8" stroke-width="1" stroke-dasharray="3,3"/><path d="M1600.5,290V518" stroke="#c8c8c8" stroke-width="1" stroke-dasharray="3,3"/><path d="M1653.5,290V518" stroke="#c8c8c8" stroke-width="1" stroke-dasharray="3,3"/><path d="M1189.5,404V405M1199.5,404V406M1210.5,404V405M1220.5,404V406M1231.5,404V405M1241.5,404V406M1252.5,404V405M1262.5,404V406M1273.5,404V405M1284.5,404V406M1294.5,404V405M1305.5,404V406M1315.5,404V405M1326.5,404V406M1336.5,404V405M1347.5,404V406M1358.5,404V405M1368.5,404V406M1379.5,404V405M1389.5,404V406M1400.5,404V405M1410.5,404V406M1421.5,404V405M1431.5,404V406M1442.5,404V405M1453.5,404V406M1463.5,404V405M1474.5,404V406M1484.5,404V405M1495.5,404V406M1505.5,404V405M1516.5,404V406M1526.5,404V405M1537.5,404V406M1548.5,404V405M1558.5,404V406M1569.5,404V405M1579.5,404V406M1590.5,404V405M1600.5,404V406M1611.5,404V405M1622.5,404V406M1632.5,404V405M1643.5,404V406M1653.5,404V405M1664.5,404V406M1674.5,404V405M1685.5,404V406M1695.5,404V405" stroke="#fff" stroke-width="1"/><path d="M1178.50,340.5 L1187.28,390.5 L1196.05,340.5 L1204.83,390.5 L1213.60,340.5 L1222.38,390.5 L1231.15,340.5 L1239.93,390.5 L1248.70,340.5 L1257.48,390.5 L1266.25,340.5 L1275.03,390.5 L1283.80,340.5 L1292.58,390.5 L1301.35,340.5 L1310.13,390.5 L1318.90,340.5 L1327.68,390.5 L1336.45,340.5 L1345.23,390.5 L1354.00,340.5 L1362.78,390.5 L1371.55,340.5 L1380.33,390.5 L1389.10,340.5" stroke="#ff1a1a" stroke-width="1.4" fill="none" stroke-miterlimit="10"/><path d="M1178.5,307.5 L1179.5,307.5 L1180.5,307.5 L1181.5,307.5 L1182.5,307.5 L1183.5,307.5 L1184.5,308.5 L1185.5,308.5 L1186.5,308.5 L1187.5,308.5 L1188.5,308.5 L1189.5,309.5 L1190.5,309.5 L1191.5,309.5 L1192.5,309.5 L1193.5,309.5 L1194.5,309.5 L1195.5,309.5 L1196.5,307.5 L1197.5,307.5 L1198.5,307.5 L1199.5,307.5 L1200.5,307.5 L1201.5,308.5 L1202.5,308.5 L1203.5,308.5 L1204.5,308.5 L1205.5,308.5 L1206.5,308.5 L1207.5,309.5 L1208.5,309.5 L1209.5,309.5 L1210.5,309.5 L1211.5,309.5 L1212.5,309.5 L1213.5,309.5 L1214.5,307.5 L1215.5,307.5 L1216.5,307.5 L1217.5,307.5 L1218.5,307.5 L1219.5,308.5 L1220.5,308.5 L1221.5,308.5 L1222.5,308.5 L1223.5,308.5 L1224.5,309.5 L1225.5,309.5 L1226.5,309.5 L1227.5,309.5 L1228.5,309.5 L1229.5,309.5 L1230.5,309.5 L1231.5,307.5 L1232.5,307.5 L1233.5,307.5 L1234.5,307.5 L1235.5,307.5 L1236.5,308.5 L1237.5,308.5 L1238.5,308.5 L1239.5,308.5 L1240.5,308.5 L1241.5,308.5 L1242.5,309.5 L1243.5,309.5 L1244.5,309.5 L1245.5,309.5 L1246.5,309.5 L1247.5,309.5 L1248.5,309.5 L1249.5,307.5 L1250.5,307.5 L1251.5,307.5 L1252.5,307.5 L1253.5,307.5 L1254.5,308.5 L1255.5,308.5 L1256.5,308.5 L1257.5,308.5 L1258.5,308.5 L1259.5,309.5 L1260.5,309.5 L1261.5,309.5 L1262.5,309.5 L1263.5,309.5 L1264.5,309.5 L1265.5,309.5 L1266.5,307.5 L1267.5,307.5 L1268.5,307.5 L1269.5,307.5 L1270.5,307.5 L1271.5,307.5 L1272.5,308.5 L1273.5,308.5 L1274.5,308.5 L1275.5,308.5 L1276.5,308.5 L1277.5,309.5 L1278.5,309.5 L1279.5,309.5 L1280.5,309.5 L1281.5,309.5 L1282.5,309.5 L1283.5,309.5 L1284.5,307.5 L1285.5,307.5 L1286.5,307.5 L1287.5,307.5 L1288.5,307.5 L1289.5,308.5 L1290.5,308.5 L1291.5,308.5 L1292.5,308.5 L1293.5,308.5 L1294.5,309.5 L1295.5,309.5 L1296.5,309.5 L1297.5,309.5 L1298.5,309.5 L1299.5,309.5 L1300.5,309.5 L1301.5,307.5 L1302.5,307.5 L1303.5,307.5 L1304.5,307.5 L1305.5,307.5 L1306.5,307.5 L1307.5,308.5 L1308.5,308.5 L1309.5,308.5 L1310.5,308.5 L1311.5,308.5 L1312.5,309.5 L1313.5,309.5 L1314.5,309.5 L1315.5,309.5 L1316.5,309.5 L1317.5,309.5 L1318.5,309.5 L1319.5,307.5 L1320.5,307.5 L1321.5,307.5 L1322.5,307.5 L1323.5,307.5 L1324.5,308.5 L1325.5,308.5 L1326.5,308.5 L1327.5,308.5 L1328.5,308.5 L1329.5,309.5 L1330.5,309.5 L1331.5,309.5 L1332.5,309.5 L1333.5,309.5 L1334.5,309.5 L1335.5,309.5 L1336.5,307.5 L1337.5,307.5 L1338.5,307.5 L1339.5,307.5 L1340.5,307.5 L1341.5,307.5 L1342.5,308.5 L1343.5,308.5 L1344.5,308.5 L1345.5,308.5 L1346.5,308.5 L1347.5,309.5 L1348.5,309.5 L1349.5,309.5 L1350.5,309.5 L1351.5,309.5 L1352.5,309.5 L1353.5,309.5 L1354.5,307.5 L1355.5,307.5 L1356.5,307.5 L1357.5,307.5 L1358.5,307.5 L1359.5,308.5 L1360.5,308.5 L1361.5,308.5 L1362.5,308.5 L1363.5,308.5 L1364.5,308.5 L1365.5,309.5 L1366.5,309.5 L1367.5,309.5 L1368.5,309.5 L1369.5,309.5 L1370.5,309.5 L1371.5,309.5 L1372.5,307.5 L1373.5,307.5 L1374.5,307.5 L1375.5,307.5 L1376.5,307.5 L1377.5,308.5 L1378.5,308.5 L1379.5,308.5 L1380.5,308.5 L1381.5,308.5 L1382.5,309.5 L1383.5,309.5 L1384.5,309.5 L1385.5,309.5 L1386.5,309.5 L1387.5,309.5 L1388.5,309.5" stroke="#ff8000" stroke-width="1.2" fill="none"/><path d="M1178.5,289V518" stroke="#00ff00" stroke-width="1"/><circle cx="1178.5" cy="308.5" r="3" fill="none" stroke="#ff00ff" stroke-width="1.2"/><path d="M1170,281H1187V283.5L1178.5,289.5L1170,283.5Z" fill="#ff00ff"/><rect x="1170" y="281" width="17" height="1.5" fill="#00ffff"/><rect x="1177" y="282" width="3" height="5" fill="#ffff00"/><rect x="1178" y="283" width="1" height="3" fill="#000"/></g></svg>
<svg class="abs" style="left:3px;top:282px" width="14" height="14"><path d="M8.5,2.5L4.5,6.5L8.5,10.5" stroke="#6b6b6b" stroke-width="1.6" fill="none"/></svg>
<div class="abs" style="left:1.0px;top:299.0px;width:58.0px;height:58.0px;border:1px solid #b4b4b4;border-right-color:#fff;border-bottom-color:#fff"></div>
<div class="t" style="left:6.0px;top:307.4px;font-size:10.7px;color:#000;">T1</div>
<div class="t" style="left:6.0px;top:321.8px;font-size:10.7px;color:#000;">T2</div>
<div class="t" style="left:6.0px;top:341.7px;font-size:10.7px;color:#000;">T2-T1</div>
<div class="abs" style="left:26.0px;top:305.0px;width:13.0px;height:15.0px;background:#e1e1e1;border:1px solid #c4c4c4"><svg width="12" height="14" style="position:absolute;left:0;top:0"><path d="M1.5,6.5L6,2.5V5H10.5V8H6V10.5Z" fill="#000"/></svg></div>
<div class="abs" style="left:43.0px;top:305.0px;width:13.0px;height:15.0px;background:#e1e1e1;border:1px solid #c4c4c4"><svg width="12" height="14" style="position:absolute;left:0;top:0"><path d="M10.5,6.5L6,2.5V5H1.5V8H6V10.5Z" fill="#000"/></svg></div>
<div class="abs" style="left:26.0px;top:323.0px;width:13.0px;height:15.0px;background:#e1e1e1;border:1px solid #c4c4c4"><svg width="12" height="14" style="position:absolute;left:0;top:0"><path d="M1.5,6.5L6,2.5V5H10.5V8H6V10.5Z" fill="#000"/></svg></div>
<div class="abs" style="left:43.0px;top:323.0px;width:13.0px;height:15.0px;background:#e1e1e1;border:1px solid #c4c4c4"><svg width="12" height="14" style="position:absolute;left:0;top:0"><path d="M10.5,6.5L6,2.5V5H1.5V8H6V10.5Z" fill="#000"/></svg></div>
<div class="abs" style="left:61.0px;top:299.0px;width:323.0px;height:58.0px;background:#fff;border:1px solid #fff;border-top:2px solid #6a6a6a;border-left:2px solid #6a6a6a"></div>
<div class="t" style="left:36.0px;top:301.8px;width:120px;text-align:center;font-size:10.5px">Time</div>
<div class="t" style="left:36.0px;top:314.5px;width:120px;text-align:center;font-size:10.5px">4.683 ms</div>
<div class="t" style="left:36.0px;top:327.7px;width:120px;text-align:center;font-size:10.5px">4.683 ms</div>
<div class="t" style="left:36.0px;top:340.6px;width:120px;text-align:center;font-size:10.5px">0.000 s</div>
<div class="t" style="left:116.0px;top:301.8px;width:120px;text-align:center;font-size:10.5px">Channel_A</div>
<div class="t" style="left:116.0px;top:314.5px;width:120px;text-align:center;font-size:10.5px">5.032 V</div>
<div class="t" style="left:116.0px;top:327.7px;width:120px;text-align:center;font-size:10.5px">5.032 V</div>
<div class="t" style="left:116.0px;top:340.6px;width:120px;text-align:center;font-size:10.5px">0.000 V</div>
<div class="t" style="left:196.0px;top:301.8px;width:120px;text-align:center;font-size:10.5px">Channel_B</div>
<div class="t" style="left:196.0px;top:314.5px;width:120px;text-align:center;font-size:10.5px">8.332 V</div>
<div class="t" style="left:196.0px;top:327.7px;width:120px;text-align:center;font-size:10.5px">8.332 V</div>
<div class="t" style="left:196.0px;top:340.6px;width:120px;text-align:center;font-size:10.5px">0.000 V</div>
<div class="abs" style="left:391.0px;top:305.0px;width:61.0px;height:21.0px;background:#e1e1e1;border:1px solid #adadad"></div>
<div class="t" style="left:361.5px;top:310.6px;width:120px;text-align:center;font-size:10.5px">Reverse</div>
<div class="abs" style="left:391.0px;top:333.0px;width:61.0px;height:21.0px;background:#e1e1e1;border:2px solid #0078d7"></div>
<div class="t" style="left:361.5px;top:338.6px;width:120px;text-align:center;font-size:10.5px">Save</div>
<div class="t" style="left:460.0px;top:347.9px;font-size:10.7px;color:#000;">Ext. trigger</div>
<div class="abs" style="left:1.0px;top:370.0px;width:131.0px;height:82.0px;border:1px solid #dcdcdc"></div>
<div class="abs" style="left:6.5px;top:364.0px;width:55.6px;height:13.0px;background:#f0f0f0"></div>
<div class="t" style="left:9.5px;top:365.7px;font-size:10.7px;color:#000;">Timebase</div>
<div class="abs" style="left:132.0px;top:370.0px;width:129.0px;height:82.0px;border:1px solid #dcdcdc"></div>
<div class="abs" style="left:138.0px;top:364.0px;width:61.8px;height:13.0px;background:#f0f0f0"></div>
<div class="t" style="left:141.0px;top:365.7px;font-size:10.7px;color:#000;">Channel A</div>
<div class="abs" style="left:261.0px;top:370.0px;width:131.0px;height:82.0px;border:1px solid #dcdcdc"></div>
<div class="abs" style="left:266.4px;top:364.0px;width:61.8px;height:13.0px;background:#f0f0f0"></div>
<div class="t" style="left:269.4px;top:365.7px;font-size:10.7px;color:#000;">Channel B</div>
<div class="abs" style="left:392.0px;top:370.0px;width:141.0px;height:82.0px;border:1px solid #dcdcdc"></div>
<div class="abs" style="left:397.0px;top:364.0px;width:49.4px;height:13.0px;background:#f0f0f0"></div>
<div class="t" style="left:400.0px;top:365.7px;font-size:10.7px;color:#000;">Trigger</div>
<div class="t" style="left:3.0px;top:383.1px;font-size:10.7px;color:#000;">Scale:</div>
<div class="abs" style="left:39.0px;top:377.0px;width:87.0px;height:20.0px;background:#fff;border:1px solid #646464"></div>
<div class="t" style="left:45.7px;top:381.9px;font-size:10.7px;color:#000;">10 us/Div</div>
<div class="t" style="left:3.0px;top:403.7px;font-size:10.7px;color:#000;">X pos.(Div):</div>
<div class="abs" style="left:64.0px;top:398.0px;width:62.0px;height:20.0px;background:#fff;border:1px solid #646464"></div>
<div class="t" style="left:69.5px;top:402.9px;font-size:10.7px;color:#000;">0</div>
<div class="abs" style="left:8.0px;top:422.0px;width:24.0px;height:18.0px;background:#cce4f7;border:1px solid #1c64b8"></div>
<div class="t" style="left:8.0px;top:425.8px;width:24.0px;text-align:center;font-size:10.7px">Y/T</div>
<div class="abs" style="left:34.0px;top:422.0px;width:26.0px;height:18.0px;background:#e1e1e1;border:1px solid #adadad"></div>
<div class="t" style="left:34.0px;top:425.8px;width:26.0px;text-align:center;font-size:10.7px">Add</div>
<div class="abs" style="left:64.0px;top:422.0px;width:26.0px;height:18.0px;background:#e1e1e1;border:1px solid #adadad"></div>
<div class="t" style="left:64.0px;top:425.8px;width:26.0px;text-align:center;font-size:10.7px">B/A</div>
<div class="abs" style="left:92.0px;top:422.0px;width:28.0px;height:18.0px;background:#e1e1e1;border:1px solid #adadad"></div>
<div class="t" style="left:92.0px;top:425.8px;width:28.0px;text-align:center;font-size:10.7px">A/B</div>
<div class="t" style="left:134.6px;top:383.1px;font-size:10.7px;color:#000;">Scale:</div>
<div class="abs" style="left:171.0px;top:377.0px;width:86.0px;height:20.0px;background:#fff;border:1px solid #646464"></div>
<div class="t" style="left:177.5px;top:381.9px;font-size:10.7px;color:#000;">2&nbsp; V/Div</div>
<div class="t" style="left:134.6px;top:403.7px;font-size:10.7px;color:#000;">Y pos.(Div):</div>
<div class="abs" style="left:196.0px;top:398.0px;width:61.0px;height:20.0px;background:#fff;border:1px solid #646464"></div>
<div class="t" style="left:202.0px;top:402.9px;font-size:10.7px;color:#000;">-0</div>
<div class="abs" style="left:136.0px;top:424.0px;width:23.0px;height:17.0px;background:#e1e1e1;border:1px solid #adadad"></div>
<div class="t" style="left:136.0px;top:427.3px;width:23.0px;text-align:center;font-size:10.7px">AC</div>
<div class="abs" style="left:161.0px;top:424.0px;width:24.0px;height:17.0px;background:#e1e1e1;border:1px solid #adadad"></div>
<div class="t" style="left:161.0px;top:427.3px;width:24.0px;text-align:center;font-size:10.7px">0</div>
<div class="abs" style="left:188.0px;top:424.0px;width:25.0px;height:17.0px;background:#cce4f7;border:1px solid #1c64b8"></div>
<div class="t" style="left:188.0px;top:427.3px;width:25.0px;text-align:center;font-size:10.7px">DC</div>
<div class="t" style="left:265.0px;top:383.1px;font-size:10.7px;color:#000;">Scale:</div>
<div class="abs" style="left:301.0px;top:377.0px;width:87.0px;height:20.0px;background:#fff;border:1px solid #646464"></div>
<div class="t" style="left:307.5px;top:381.9px;font-size:10.7px;color:#000;">5&nbsp; V/Div</div>
<div class="t" style="left:265.0px;top:403.7px;font-size:10.7px;color:#000;">Y pos.(Div):</div>
<div class="abs" style="left:327.0px;top:399.0px;width:61.0px;height:19.0px;background:#fff;border:1px solid #646464"></div>
<div class="t" style="left:333.0px;top:403.9px;font-size:10.7px;color:#000;">0</div>
<div class="abs" style="left:266.0px;top:424.0px;width:24.0px;height:17.0px;background:#e1e1e1;border:1px solid #adadad"></div>
<div class="t" style="left:266.0px;top:427.3px;width:24.0px;text-align:center;font-size:10.7px">AC</div>
<div class="abs" style="left:292.0px;top:424.0px;width:22.0px;height:17.0px;background:#e1e1e1;border:1px solid #adadad"></div>
<div class="t" style="left:292.0px;top:427.3px;width:22.0px;text-align:center;font-size:10.7px">0</div>
<div class="abs" style="left:316.0px;top:424.0px;width:25.0px;height:17.0px;background:#cce4f7;border:1px solid #1c64b8"></div>
<div class="t" style="left:316.0px;top:427.3px;width:25.0px;text-align:center;font-size:10.7px">DC</div>
<div class="abs" style="left:343.0px;top:424.0px;width:17.0px;height:17.0px;background:#e1e1e1;border:1px solid #adadad"></div>
<div class="t" style="left:343.0px;top:427.3px;width:17.0px;text-align:center;font-size:10.7px">-</div>
<svg class="abs" style="left:239.0px;top:422.2px" width="14" height="14"><circle cx="7" cy="7" r="5.8" fill="#fff" stroke="#cacaca" stroke-width="1.3"/><circle cx="7" cy="7" r="3.5" fill="#c8c8c8"/></svg>
<svg class="abs" style="left:374.3px;top:424.2px" width="14" height="14"><circle cx="7" cy="7" r="5.8" fill="#fff" stroke="#cacaca" stroke-width="1.3"/><circle cx="7" cy="7" r="3.5" fill="#c8c8c8"/></svg>
<div class="t" style="left:396.0px;top:383.4px;font-size:10.7px;color:#000;">Edge:</div>
<div class="abs" style="left:440.0px;top:382.0px;width:15.0px;height:15.0px;background:#cce4f7;border:1px solid #0078d7"><svg width="13" height="13" style="position:absolute;left:0;top:0"><path d="M2,10.5H7V3.5H11M4.5,6.5H9.5" stroke="#000" stroke-width="1.1" fill="none"/></svg></div>
<div class="abs" style="left:458.0px;top:382.0px;width:15.0px;height:15.0px;background:#e1e1e1;border:1px solid #adadad"><svg width="13" height="13" style="position:absolute;left:0;top:0"><path d="M2.5,2.5H7V10.5H11M4.5,7H10" stroke="#000" stroke-width="1.1" fill="none"/></svg></div>
<div class="abs" style="left:479.0px;top:382.0px;width:18.0px;height:17.0px;background:#cce4f7;border:1px solid #1c64b8"></div>
<div class="t" style="left:479.0px;top:385.3px;width:18.0px;text-align:center;font-size:10.7px">A</div>
<div class="abs" style="left:499.0px;top:382.0px;width:24.0px;height:17.0px;background:#e1e1e1;border:1px solid #adadad"></div>
<div class="t" style="left:499.0px;top:385.3px;width:24.0px;text-align:center;font-size:10.7px">B</div>
<div class="t" style="left:396.0px;top:403.4px;font-size:10.7px;color:#000;">Level:</div>
<div class="abs" style="left:439.0px;top:402.0px;width:94.0px;height:19.0px;background:#fff;border:1px solid #646464"></div>
<div class="t" style="left:446.0px;top:406.9px;font-size:10.7px;color:#000;">0</div>
<div class="abs" style="left:397.0px;top:423.0px;width:36.0px;height:18.0px;background:#e1e1e1;border:1px solid #adadad"></div>
<div class="t" style="left:397.0px;top:426.8px;width:36.0px;text-align:center;font-size:10.7px">Single</div>
<div class="abs" style="left:436.0px;top:423.0px;width:40.0px;height:18.0px;background:#e1e1e1;border:1px solid #adadad"></div>
<div class="t" style="left:436.0px;top:426.8px;width:40.0px;text-align:center;font-size:10.7px">Normal</div>
<div class="abs" style="left:479.0px;top:423.0px;width:44.0px;height:18.0px;background:#e1e1e1;border:1px solid #adadad"></div>
<div class="t" style="left:483.0px;top:426.9px;font-size:10.7px;color:#000;">Auto</div>
</div>


</body></html>
